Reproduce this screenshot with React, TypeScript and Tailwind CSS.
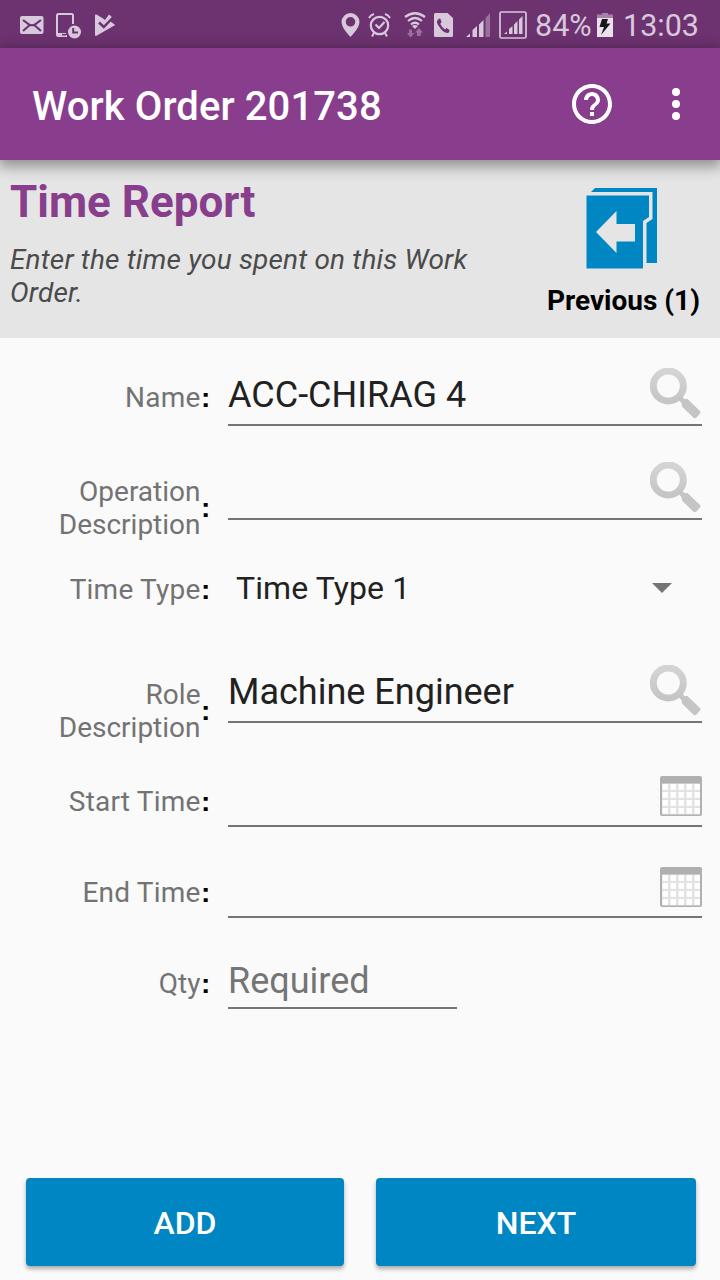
import React from "react";

const lilac = "#d8c8dc";

function StatusBar() {
  return (
    <div className="flex h-12 shrink-0 items-start bg-[#6d3270] text-[#d8c8dc]">
      <svg className="ml-5 mt-4 shrink-0" width="24" height="18" viewBox="0 0 24 18">
        <rect width="23.5" height="18" rx="2" fill={lilac} />
        <path d="M3 4 L8.500 8.200 Q12 10.300 15.500 8.200 L21 4 M3 15 L9.500 9.300 M21 15 L14.500 9.300" fill="none" stroke="#6d3270" strokeWidth="2.1" />
      </svg>
      <svg className="ml-3 mt-[13px] shrink-0" width="26" height="26" viewBox="0 0 26 26">
        <path d="M17 11V2.500Q17 1 15.500 1H2.500Q1 1 1 2.500V21.500Q1 23 2.500 23H11" fill="none" stroke={lilac} strokeWidth="2" />
        <path d="M1 20H10V24H2.500Q1 24 1 22.500Z" fill={lilac} />
        <path d="M6 21.700H10" stroke="#6d3270" strokeWidth="1.5" />
        <circle cx="18.500" cy="19" r="6.500" fill={lilac} />
        <path d="M17.200 15V19.500H22" fill="none" stroke="#6d3270" strokeWidth="2" />
      </svg>
      <svg className="ml-[13px] mt-[14px] shrink-0" width="21" height="23" viewBox="0 0 21 23">
        <path d="M0 1.500Q0 0 1.500 .5L8 4.500 10 6 14 .5 16.500 2.500 15.500 7.500 20.200 11 1.500 21.800Q0 22.300 0 21Z" fill={lilac} />
        <path d="M4 8.500L8.800 13L17 4.500" fill="none" stroke="#6d3270" strokeWidth="2.500" />
      </svg>
      <svg className="ml-[225px] mt-[13px] shrink-0" width="19" height="24" viewBox="0 0 19 24">
        <path fillRule="evenodd" d="M9.500 0A9 9 0 0 0 .5 9C.5 15 9.500 24 9.500 24S18.500 15 18.500 9A9 9 0 0 0 9.500 0ZM9.500 4A4.800 4.800 0 1 1 9.500 13.600A4.800 4.800 0 0 1 9.500 4Z" fill={lilac} />
      </svg>
      <svg className="ml-2 mt-[13px] shrink-0" width="23" height="24" viewBox="0 0 23 24" fill="none" stroke={lilac}>
        <circle cx="11.500" cy="12.500" r="8.700" strokeWidth="2.200" />
        <path d="M1 5Q2.500 2 6 1M17 1Q20.500 2 22 5M6 20L4 23.500M17 20L19 23.500" strokeWidth="2" />
        <path d="M7.500 11.500L11 15L16.500 9" strokeWidth="2.200" />
      </svg>
      <svg className="ml-[13px] mt-3 shrink-0" width="22" height="26" viewBox="0 0 22 26">
        <path d="M1 5Q11 -2.500 21 5M4 9Q11 3 18 9M7 12.500Q11 9 15 12.500" fill="none" stroke={lilac} strokeWidth="2.200" />
        <path d="M8 14Q11 12 14 14L11 17Z" fill={lilac} />
        <path d="M5 17.500H8V21H10.500L6.500 25.500L3 21H5ZM13 24V20.500H11L15 16L19 20.500H16.800V24Z" fill={lilac} opacity=".42" />
      </svg>
      <svg className="ml-2 mt-[13px] shrink-0" width="19" height="24" viewBox="0 0 19 24">
        <path d="M1.500 0H13.500L19 5V22.500Q19 24 17.500 24H1.500Q0 24 0 22.500V1.500Q0 0 1.500 0Z" fill={lilac} />
        <path d="M4.500 6Q5.500 5 6.500 6L7.500 9L6.300 11Q8 14.500 11 16.500L12.500 15L15.500 17Q15.500 19.500 14 20Q10 20 6.500 15.500Q2.500 10.500 3 8Z" fill="#6d3270" />
      </svg>
      <svg className="ml-[13px] mt-[13px] shrink-0" width="25" height="24" viewBox="0 0 25 24" fill={lilac}>
        <path d="M0 24L4 20.500V24ZM6.500 24V17L11 13V24ZM13 24V11.500L17.500 7V24Z" />
        <path d="M19.500 24V5L24 0V24Z" opacity=".42" />
      </svg>
      <svg className="ml-2 mt-[11px] shrink-0" width="28" height="28" viewBox="0 0 28 28" fill={lilac}>
        <rect x="1" y="1" width="26" height="26" rx="1.500" fill="none" stroke={lilac} strokeWidth="1.7" />
        <path d="M5 23L8 20.500V23ZM10 23V18L13.500 15V23ZM15 23V13.500L18.500 10V23ZM20 23V8.500L23.500 5V23Z" />
      </svg>
      <span className="ml-2 mt-[7px] w-[62px] whitespace-nowrap text-[30.5px] leading-[37px]">84%</span>
      <svg className="mt-[13px] shrink-0" width="16" height="24" viewBox="0 0 16 24">
        <path d="M0 5V1.500H5V0H11V1.500H16V5Z" fill="#a681aa" />
        <path d="M0 5H16V24H0Z" fill="#ebe0ed" />
        <path d="M5 6H11L9.500 10.500H13.500L4 22L7 14H2.500Z" fill="#181619" />
      </svg>
      <span className="ml-[10px] mt-[7px] whitespace-nowrap text-[30.5px] leading-[37px]">13:03</span>
    </div>
  );
}

function SearchIcon() {
  return (
    <svg className="mb-1 shrink-0" width="52" height="52" viewBox="0 0 52 52">
      <defs>
        <linearGradient id="lens" x1="0" y1="0" x2="0" y2="1">
          <stop stopColor="#d4d4d4" />
          <stop offset="1" stopColor="#c5c5c5" />
        </linearGradient>
      </defs>
      <circle cx="18.300" cy="18" r="15" fill="none" stroke="url(#lens)" strokeWidth="7" />
      <path d="M29 29L34 34" stroke="#c5c5c5" strokeWidth="5" />
      <path d="M31.500 34Q33 30.500 37.500 31L50 43Q51.200 44.300 50 45.500L46.500 49.500Q45 51 43.500 49.800L32 38.500Z" fill="#c5c5c5" />
    </svg>
  );
}

function CalendarIcon() {
  return (
    <svg className="mb-[9px] shrink-0" width="42" height="40" viewBox="0 0 42 40">
      <rect width="42" height="40" rx="2" fill="#b0b0b0" />
      <rect x="2" y="7.500" width="38" height="31" fill="#e2e2e2" />
      {[2.5, 10.5, 18.5, 26.5, 34.5].map((x) =>
        [8, 16, 24, 32].map((y) => <rect key={`${x}-${y}`} x={x} y={y} width="5.500" height="5.800" fill="#fff" />)
      )}
    </svg>
  );
}

function Label({ pad, text, colon = "" }: { pad: string; text: React.ReactNode; colon?: string }) {
  return (
    <div className={`flex w-[228px] shrink-0 items-center self-start ${pad}`}>
      <span className="w-[200.5px] text-right text-[28px] leading-[33px] text-[#737373]">{text}</span>
      <span className={`ml-[0.5px] font-['Liberation_Sans',sans-serif] text-[28px] font-bold leading-[33px] tracking-normal text-black ${colon}`}>:</span>
    </div>
  );
}

function Field({ size, value, children }: { size: string; value?: string; children?: React.ReactNode }) {
  return (
    <div className={`flex items-end justify-between border-b-2 border-[#757575] ${size}`}>
      <span className="mb-[8px] text-[36px] leading-[42px] text-[#212121]">{value}</span>
      {children}
    </div>
  );
}

export default function App() {
  return (
    <div className="flex h-[1280px] w-[720px] flex-col overflow-hidden bg-[#fafafa] font-['Roboto',sans-serif]">
      <StatusBar />
      <header className="relative flex h-28 shrink-0 items-center bg-[#883e8c] text-white shadow-[0_4px_14px_2px_rgba(0,0,0,0.4)]">
        <h1 className="ml-8 mt-1 w-[540px] whitespace-nowrap text-[40px] font-medium leading-[47px] tracking-[0.1px]">Work Order 201738</h1>
        <svg width="40" height="40" viewBox="2 2 20 20" fill="white">
          <path d="M11 18h2v-2h-2v2zm1-16C6.480 2 2 6.480 2 12s4.480 10 10 10 10-4.480 10-10S17.520 2 12 2zm0 18c-4.410 0-8-3.590-8-8s3.590-8 8-8 8 3.590 8 8-3.590 8-8 8zm0-14c-2.210 0-4 1.790-4 4h2c0-1.100.9-2 2-2s2 .9 2 2c0 2-3 1.750-3 5h2c0-2.250 3-2.500 3-5 0-2.210-1.790-4-4-4z" />
        </svg>
        <svg className="ml-[60px]" width="8" height="32" viewBox="0 0 8 32" fill="white">
          <circle cx="4" cy="4" r="4" /><circle cx="4" cy="16" r="4" /><circle cx="4" cy="28" r="4" />
        </svg>
      </header>
      <section className="flex h-[178px] shrink-0 justify-between bg-[#e5e5e5] pl-[10px] pr-5">
        <div className="w-[480px] pt-4">
          <h2 className="text-[44px] font-bold leading-[52px] text-[#883e8c]">Time Report</h2>
          <p className="mt-[15px] text-[28px] italic leading-[33px] tracking-[0.18px] text-[#4b4b4b]">Enter the time you spent on this Work Order.</p>
        </div>
        <div className="flex flex-col items-center pt-[27px]">
          <svg className="mr-[2px]" width="72" height="82" viewBox="0 0 72 82" fill="#0087c3">
            <path d="M5 5L9 1H71V76H60.500V36L66.500 32V5Z" />
            <path fillRule="evenodd" d="M.5 8.500H63V30L57 34V81.500H.5ZM10 45L30.500 66V54.500H49V37H30.500V24Z" />
          </svg>
          <span className="mt-[15px] whitespace-nowrap text-[28px] font-bold leading-[33px] text-black">Previous (1)</span>
        </div>
      </section>
      <main className="flex grow flex-col">
        <div className="flex h-[106px] items-start">
          <Label pad="pt-[43px] tracking-[0.2px]" text="Name" />
          <Field size="h-[88px] w-[474px]" value="ACC-CHIRAG 4"><SearchIcon /></Field>
        </div>
        <div className="flex h-[106px] items-start">
          <Label pad="pt-[31px]" colon="mb-[2px]" text={<>Operation<br />Description</>} />
          <Field size="h-[76px] w-[474px]"><SearchIcon /></Field>
        </div>
        <div className="flex h-[97px] items-start">
          <Label pad="pt-[23px] tracking-[0.22px]" text="Time Type" />
          <div className="flex w-[444px] items-center justify-between pl-2 pt-[19px]">
            <span className="text-[32px] leading-[38px] tracking-[0.1px] text-[#212121]">Time Type 1</span>
            <svg width="20" height="10" viewBox="0 0 20 10"><path d="M0 0H20L10 10Z" fill="#757575" /></svg>
          </div>
        </div>
        <div className="flex h-[106px] items-start">
          <Label pad="pt-[31px]" colon="mb-[2px]" text={<>Role<br />Description</>} />
          <Field size="h-[76px] w-[474px]" value="Machine Engineer"><SearchIcon /></Field>
        </div>
        <div className="flex h-[91px] items-start">
          <Label pad="pt-[32px] tracking-[0.2px]" text="Start Time" />
          <Field size="h-[74px] w-[474px]"><CalendarIcon /></Field>
        </div>
        <div className="flex h-[91px] items-start">
          <Label pad="pt-[32px] tracking-[0.2px]" text="End Time" />
          <Field size="h-[74px] w-[474px]"><CalendarIcon /></Field>
        </div>
        <div className="flex h-[91px] items-start">
          <Label pad="pt-[32px]" text="Qty" />
          <div className="flex h-[74px] w-[229px] items-end border-b-2 border-[#757575]">
            <span className="mb-[5px] text-[36px] leading-[42px] text-[#757575]">Required</span>
          </div>
        </div>
      </main>
      <footer className="flex shrink-0 gap-8 pb-[14px] pl-[26px] pr-6 text-[32px] font-medium leading-[38px] text-white">
        <button className="h-[88px] w-[318px] rounded-[4px] bg-[#0087c3] pt-[2px] shadow-[0_3px_4px_rgba(0,0,0,0.32)]">ADD</button>
        <button className="h-[88px] w-[320px] rounded-[4px] bg-[#0087c3] pt-[2px] shadow-[0_3px_4px_rgba(0,0,0,0.32)]">NEXT</button>
      </footer>
    </div>
  );
}
